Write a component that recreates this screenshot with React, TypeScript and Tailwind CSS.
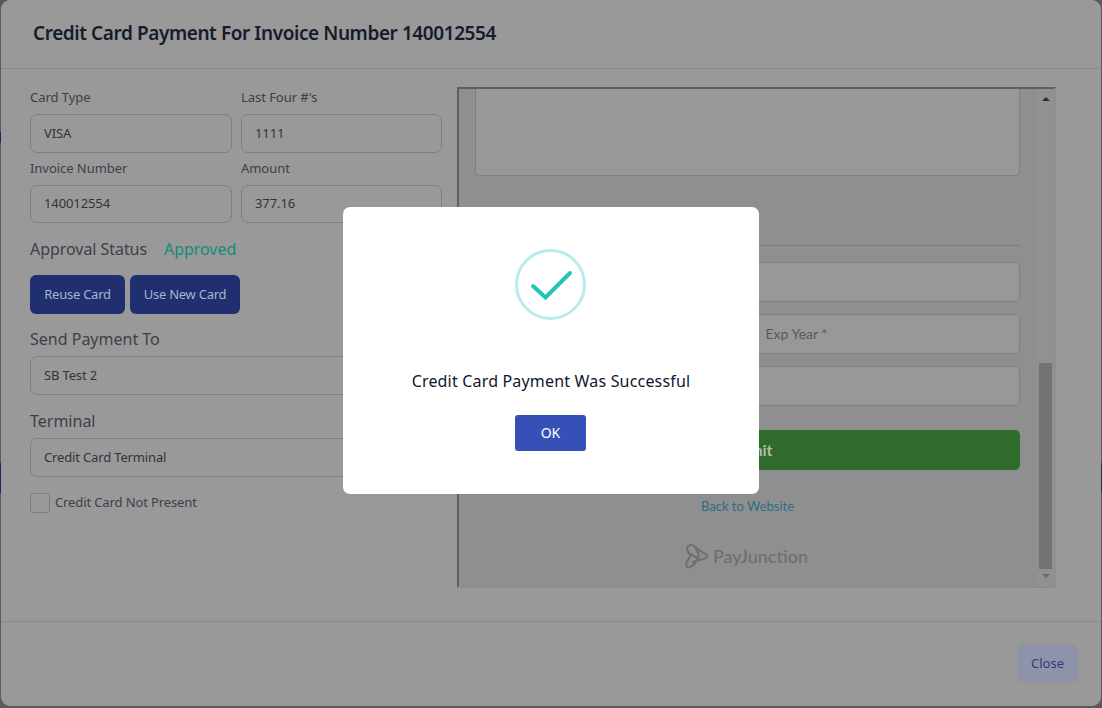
import { useState } from 'react';

const uiFont = "font-['Noto_Sans',sans-serif]";

function Field({ label, value, inputClass }: { label: string; value: string; inputClass: string }) {
  return (
    <div>
      <label className="block h-[19px] text-[13px] leading-[19px] tracking-[-0.05px] text-[#3c404a]">{label}</label>
      <div className={`mt-[7px] flex items-center rounded-[7px] border border-[#7f7f7f] pl-[13px] text-[13px] tracking-[-0.1px] text-[#31343c] ${inputClass}`}>
        {value}
      </div>
    </div>
  );
}

function SelectBox({ value }: { value: string }) {
  return (
    <div className="flex h-[39px] items-center rounded-[7px] border border-[#7f7f7f] pl-[13px] text-[13px] tracking-[-0.15px] text-[#31343c]">
      {value}
    </div>
  );
}

function FrameInput({ children }: { children?: React.ReactNode }) {
  return (
    <div className="flex h-[40px] items-center rounded-[5px] border border-[#7f7f7f] bg-[#989898] pb-px pl-[12px] font-['Lato',sans-serif] text-[14px] text-[#555a5e]">
      {children}
    </div>
  );
}

function PaymentFrame() {
  return (
    <div className="flex h-[501px] w-[599px] border-2 border-t-[#5f5f5f] border-l-[#5f5f5f] border-r-[#8f8f8f] border-b-[#8c8c8c] bg-[#8f8f8f]">
      <div className="flex w-[577px] flex-col px-4">
        <div className="h-[87px] rounded-b-[5px] border border-t-0 border-[#7f7f7f] bg-[#989898]" />
        <div className="mt-[69px] h-px bg-[#7d7d7d]" />
        <div className="mt-4 flex flex-col gap-3">
          <FrameInput />
          <div className="grid grid-cols-2 gap-[10px]">
            <FrameInput />
            <FrameInput>
              <span>
                Exp Year <span className="text-[#8a4a4a]">*</span>
              </span>
            </FrameInput>
          </div>
          <FrameInput />
        </div>
        <button className="mt-6 h-[40px] rounded-[5px] bg-[#316b2c] pb-px font-['Lato',sans-serif] text-[16px] font-bold text-[#a9bfa6]">
          Submit
        </button>
        <a className="mt-[27px] text-center font-['Lato',sans-serif] text-[13px] leading-[18px] text-[#2b6f86]">Back to Website</a>
        <div className="mt-[28px] flex items-center justify-center gap-[4px] pl-[1px]">
          <svg width="24" height="26" viewBox="0 0 24 26" fill="none" stroke="#6c6f72" strokeWidth="2" strokeLinecap="round">
            <path d="M3 3.500C5 .8 8 1.200 10 4L21 11.500C23 13 22.500 15 20 15.500L8 19" />
            <path d="M3 3.500C1 6 2 8 4 10.500L12.500 15" />
            <path d="M10 4C12 8 14.500 10 13.500 14C11 20 6.500 24.500 3.500 24.500C1 24.500 .8 21.500 2 19L6 11.500" />
          </svg>
          <span className="font-['Lato',sans-serif] text-[18px] font-medium leading-[24px] text-[#6c6f72]">PayJunction</span>
          <span className="mb-2 h-[2px] w-[2px] -ml-[3px] rounded-full bg-[#7c7f82]" />
        </div>
      </div>
      <div className="flex w-[18px] flex-col items-center bg-[#919191] pl-[1px]">
        <div className="mt-[8px] h-0 w-0 border-x-[4px] border-b-[4px] border-x-transparent border-b-[#2e2e2e]" />
        <div className="mt-[262px] h-[206px] w-[13px] bg-[#737373]" />
        <div className="mt-[5px] h-0 w-0 border-x-[4px] border-t-[4px] border-x-transparent border-t-[#6b6b6b]" />
      </div>
    </div>
  );
}

export default function App() {
  const [notPresent, setNotPresent] = useState(false);
  const [showAlert, setShowAlert] = useState(true);

  return (
    <div className={`relative h-[708px] w-[1102px] overflow-hidden bg-[#5a5a5a] ${uiFont}`}>
      {/* table behind the dialog, only its top edge peeks out */}
      <div className="flex pt-[703px] text-[13px] leading-[18px] text-[#14161c]">
        <span className="ml-[65px] w-[272px]">140012557</span>
        <span className="w-[138px]">Apr 20, 2022</span>
        <span className="w-[139px]">140133</span>
        <span className="w-[138px]">110334</span>
        <span className="w-[275px]">HS0250</span>
        <span>Yes</span>
      </div>

      {/* bits of the page behind that show at the dialog's edges */}
      <span className="absolute left-0 top-[10px] h-[9px] w-px bg-[#8a5a2a]" />
      <span className="absolute left-0 top-[132px] h-[11px] w-px bg-[#1c2a60]" />
      <span className="absolute left-0 top-[188px] h-[5px] w-px bg-[#8a5a2a]" />
      <span className="absolute left-0 top-[463px] h-[30px] w-px bg-[#1c2a60]" />
      <span className="absolute right-0 top-[463px] h-[30px] w-px bg-[#1c2a60]" />

      <div className="absolute left-px right-px top-0 flex h-[706px] flex-col rounded-[9px] bg-[#999999]">
        <div className="flex h-[69px] shrink-0 items-center border-b border-[#8a8a8a] pl-[32px] pb-px">
          <h1 className="text-[19px] font-semibold tracking-[-0.42px] text-[#151c2c]">Credit Card Payment For Invoice Number 140012554</h1>
        </div>

        <div className="flex h-[552px] shrink-0 items-start pl-[29px] pt-[19px]">
          <div className="w-[412px]">
            <div className="grid grid-cols-[202px_201px] gap-x-[9px]">
              <Field label="Card Type" value="VISA" inputClass="h-[39px]" />
              <Field label="Last Four #'s" value="1111" inputClass="h-[39px]" />
            </div>
            <div className="mt-[6px] grid grid-cols-[202px_201px] gap-x-[9px]">
              <Field label="Invoice Number" value="140012554" inputClass="h-[38px]" />
              <Field label="Amount" value="377.16" inputClass="h-[38px]" />
            </div>
            <div className="mt-[15px] flex h-[22px] items-center gap-[17px] text-[16px] leading-[22px] tracking-[-0.05px]">
              <span className="text-[#3c404a]">Approval Status</span>
              <span className="text-[#168a79]">Approved</span>
            </div>
            <div className="mt-[15px] flex gap-[5px]">
              <button className="h-[39px] w-[95px] rounded-[6px] bg-[#1f2f70] text-[13px] tracking-[-0.25px] text-[#aab3cf]">Reuse Card</button>
              <button className="h-[39px] w-[110px] rounded-[6px] bg-[#1f2f70] text-[13px] tracking-[-0.25px] text-[#aab3cf]">Use New Card</button>
            </div>
            <label className="mt-[14px] block h-[22px] text-[16px] leading-[22px] text-[#3c404a]">Send Payment To</label>
            <div className="mt-[6px]">
              <SelectBox value="SB Test 2" />
            </div>
            <label className="mt-[15px] block h-[22px] text-[16px] leading-[22px] text-[#3c404a]">Terminal</label>
            <div className="mt-[6px]">
              <SelectBox value="Credit Card Terminal" />
            </div>
            <div className="mt-[16px] flex items-center gap-[5px]">
              <button
                onClick={() => setNotPresent(!notPresent)}
                className="h-[20px] w-[20px] rounded-[3px] border border-[#7f7f7f]"
              />
              <span className="text-[13px] tracking-[-0.12px] text-[#3c404a]">Credit Card Not Present</span>
            </div>
          </div>
          <div className="ml-[15px] -mt-px">
            <PaymentFrame />
          </div>
        </div>

        <div className="flex flex-1 items-start justify-end border-t border-[#8a8a8a] pr-[23px] pt-[22px]">
          <button className="h-[39px] w-[61px] rounded-[6px] bg-[#8f93a9] text-[13px] text-[#2e3b7c]">Close</button>
        </div>
      </div>

      {showAlert && (
        <div className="absolute left-[343px] top-[207px] flex h-[287px] w-[416px] flex-col items-center rounded-[7px] bg-white pt-[41px]">
          <svg width="72" height="72" viewBox="0 0 72 72" fill="none">
            <circle cx="35.500" cy="36.500" r="34" stroke="#b7ecec" strokeWidth="3" />
            <path d="M18 38l12.500 11.500L55 25" stroke="#1ec5b8" strokeWidth="4" strokeLinecap="round" strokeLinejoin="miter" />
          </svg>
          <p className="mt-[50px] text-[16px] leading-[22px] tracking-[0.18px] text-[#10162f]">Credit Card Payment Was Successful</p>
          <button
            onClick={() => setShowAlert(false)}
            className="mt-[23px] -ml-px h-[36px] w-[71px] rounded-[3px] bg-[#3650b8] pb-[2px] text-[14px] text-white"
          >
            OK
          </button>
        </div>
      )}
    </div>
  );
}
